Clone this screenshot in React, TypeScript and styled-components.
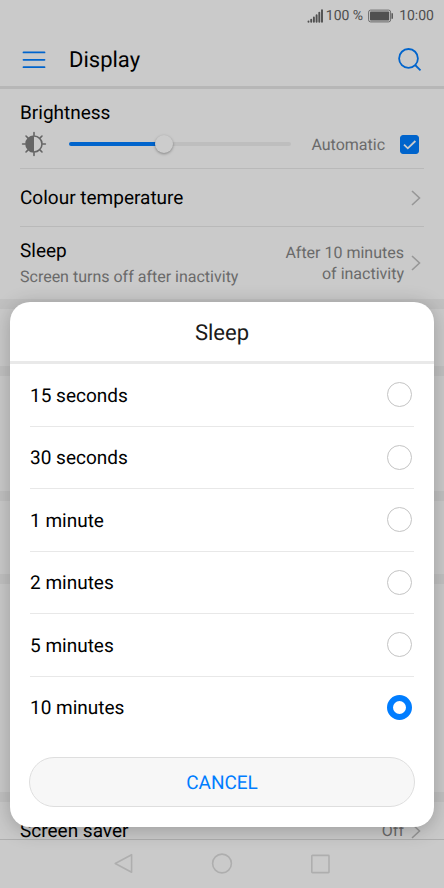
import React, { useState } from "react";
import styled, { createGlobalStyle } from "styled-components";

const accent = "#007dff";

const GlobalStyle = createGlobalStyle`
  *, *::before, *::after { box-sizing: border-box; }
  html, body, #root { height: 100%; }
  body {
    margin: 0;
    background: #fdfdfd;
    color: #000;
    font-family: Roboto, "Noto Sans", sans-serif;
    font-size: 19px;
    line-height: 24px;
    text-rendering: geometricPrecision;
  }
  button, input { font: inherit; color: inherit; margin: 0; text-rendering: inherit; }
  svg { display: block; flex: none; }
`;

const Screen = styled.div`
  position: relative;
  display: flex;
  flex-direction: column;
  height: 100vh;
  overflow: hidden;
`;

const StatusBar = styled.div`
  display: flex;
  flex: none;
  align-items: center;
  justify-content: flex-end;
  height: 31px;
  padding: 0 10px;
  color: #646464;
  font-size: 14px;
  line-height: 20px;
`;

const BatteryLevel = styled.span`
  margin: 0 5px 0 3px;
`;

const Clock = styled.span`
  margin-left: 6px;
`;

const Header = styled.header`
  display: flex;
  flex: none;
  align-items: center;
  height: 58px;
  padding: 2px 20px 0;
  border-bottom: 3px solid #e5e5e5;
`;

const IconButton = styled.button`
  display: flex;
  align-items: center;
  justify-content: center;
  width: 28px;
  height: 32px;
  padding: 0;
  border: 0;
  background: none;
  color: ${accent};
  cursor: pointer;
`;

const Title = styled.h1`
  flex: 1;
  margin: 0 0 0 21px;
  padding-top: 2px;
  font-size: 22px;
  font-weight: 400;
  line-height: 28px;
`;

const Settings = styled.main`
  flex: 1;
  min-height: 0;
  overflow: hidden;
`;

const Section = styled.section<{ $height?: number }>`
  min-height: ${(p) => p.$height ?? 0}px;
  padding: 0 20px;
  border-bottom: 10px solid #f2f2f2;
  box-sizing: content-box;
  &:last-child { border-bottom: 0; }
`;

const BrightnessBlock = styled.div`
  padding: 12px 0 8px;
  border-bottom: 1px solid #e8e8e8;
`;

const BrightnessControls = styled.div`
  display: flex;
  align-items: center;
  height: 32px;
  margin-top: 3px;
`;

const Slider = styled.input`
  appearance: none;
  flex: 1;
  min-width: 0;
  height: 24px;
  margin: 0 20px 0 21px;
  background: none;

  &::-webkit-slider-runnable-track {
    height: 4px;
    border-radius: 2px;
    background: linear-gradient(to right, ${accent} var(--level), #eeeeee var(--level));
  }
  &::-webkit-slider-thumb {
    appearance: none;
    width: 18px;
    height: 18px;
    margin-top: -7px;
    border-radius: 50%;
    background: #fff;
    box-shadow: 0 1px 3px rgba(0, 0, 0, 0.35);
  }
`;

const Muted = styled.span`
  color: #858585;
  font-size: 16px;
  line-height: 21px;
`;

const AutomaticLabel = styled.label`
  display: flex;
  align-items: center;
  gap: 15px;
  padding-right: 5px;
`;

const CheckSlot = styled.span`
  display: grid;
  color: #fff;
  > * { grid-area: 1 / 1; }
  > svg { pointer-events: none; }
`;

const Checkbox = styled.input`
  appearance: none;
  width: 19px;
  height: 19px;
  border: 1px solid #b5b5b5;
  border-radius: 3px;
  &:checked { border-color: ${accent}; background: ${accent}; }
`;

const SettingRow = styled.button<{ $height: number; $divided?: boolean }>`
  display: flex;
  align-items: center;
  width: 100%;
  min-height: ${(p) => p.$height}px;
  padding: 0;
  border: 0;
  border-bottom: ${(p) => (p.$divided ? "1px solid #e8e8e8" : "0")};
  background: none;
  text-align: left;
  cursor: pointer;
`;

const RowText = styled.span`
  display: flex;
  flex: 1;
  flex-direction: column;
  gap: 3px;
`;

const RowValue = styled(Muted)`
  max-width: 130px;
  text-align: right;
`;

const Chevron = styled.svg`
  margin: 0 3px 0 7px;
`;

const NavBar = styled.nav`
  display: flex;
  flex: none;
  align-items: center;
  justify-content: center;
  gap: 70px;
  height: 49px;
  border-top: 1px solid #dadada;
  button { color: #dadada; }
`;

const Scrim = styled.div`
  position: absolute;
  inset: 0;
  display: flex;
  align-items: flex-end;
  padding: 0 10px 61px;
  background: rgba(0, 0, 0, 0.2);
`;

const Dialog = styled.div`
  width: 100%;
  overflow: hidden;
  border-radius: 20px;
  background: #fff;
  box-shadow: 0 3px 20px rgba(0, 0, 0, 0.24);
`;

const DialogTitle = styled.h2`
  margin: 0;
  padding: 18px 20px 13px;
  border-bottom: 3px solid #e9e9e9;
  color: #1a1a1a;
  font-size: 22px;
  font-weight: 400;
  line-height: 28px;
  text-align: center;
`;

const Options = styled.div`
  display: grid;
  grid-auto-rows: 1fr;
  height: 375px;
  padding: 0 20px;
`;

const Option = styled.label`
  display: flex;
  align-items: center;
  justify-content: space-between;
  padding-right: 2px;
  border-bottom: 1px solid #e8e8e8;
  cursor: pointer;
  &:last-child { border-bottom-color: transparent; }
`;

const OptionText = styled.span`
  padding-top: 2px;
`;

const Radio = styled.input`
  appearance: none;
  width: 25px;
  height: 25px;
  border: 1px solid #c4c4c4;
  border-radius: 50%;
  &:checked { border: 6px solid ${accent}; }
`;

const DialogActions = styled.div`
  display: flex;
  padding: 18px 19px 20px;
`;

const CancelButton = styled.button`
  flex: 1;
  height: 50px;
  padding: 2px 0 0;
  border: 1px solid #dedede;
  border-radius: 25px;
  background: #f7f7f7;
  color: ${accent};
  cursor: pointer;
`;

const RightArrow = () => (
  <Chevron width="10" height="16" viewBox="0 0 10 16" fill="none" stroke="#bdbdbd" strokeWidth="1.6">
    <path d="M1 1l7.5 7L1 15" />
  </Chevron>
);

const SignalIcon = () => (
  <svg width="16" height="14" viewBox="0 0 16 14" stroke="currentColor" strokeWidth="1.9" strokeLinecap="round">
    <path d="M1.5 12.4v.3M4.2 10.8v1.9M6.9 8.5v4.2M9.6 6.2v6.5M12.3 3.6v9.1M15 1.1v11.6" />
  </svg>
);

const BatteryIcon = () => (
  <svg width="25" height="14" viewBox="0 0 25 14" fill="none">
    <rect x=".6" y="1.1" width="22" height="11.8" rx="2" stroke="#858585" />
    <rect x="2" y="2.5" width="19.2" height="9" rx=".8" fill="currentColor" />
    <path d="M24.2 4.3v5.4" stroke="currentColor" strokeWidth="1.4" />
  </svg>
);

const MenuIcon = () => (
  <svg width="24" height="18" viewBox="0 0 24 18" stroke="currentColor" strokeWidth="1.8" strokeLinecap="round">
    <path d="M1.5 1.4h21M1.5 8.8h21M1.5 16.2h21" />
  </svg>
);

const SearchIcon = () => (
  <svg width="24" height="24" viewBox="0 0 24 24" fill="none" stroke="currentColor" strokeWidth="1.8">
    <circle cx="10.5" cy="10.4" r="9.4" />
    <path d="M17.1 17l5.4 5.4" />
  </svg>
);

const BrightnessIcon = () => (
  <svg width="28" height="26" viewBox="-14 -13 28 26" fill="none" stroke="#7f7f7f" strokeWidth="1.6" strokeLinecap="round">
    <circle r="8" />
    <path d="M0 -8A8 8 0 0 0 0 8z" fill="#7f7f7f" stroke="none" />
    <path d="M0 -11.4v2.6M0 8.8v2.6M-11.4 0h2.6M8.8 0h2.6M-8 -8l1.6 1.6M8 -8l-1.6 1.6M-8 8l1.6 -1.6M8 8l-1.6 -1.6" />
  </svg>
);

const durations = ["15 seconds", "30 seconds", "1 minute", "2 minutes", "5 minutes", "10 minutes"];

export default function App() {
  const [selected, setSelected] = useState("10 minutes");
  const [level, setLevel] = useState(42);
  const [automatic, setAutomatic] = useState(true);
  const [open, setOpen] = useState(true);

  return (
    <>
      <GlobalStyle />
      <Screen>
        <StatusBar>
          <SignalIcon />
          <BatteryLevel>100 %</BatteryLevel>
          <BatteryIcon />
          <Clock>10:00</Clock>
        </StatusBar>
        <Header>
          <IconButton aria-label="Menu"><MenuIcon /></IconButton>
          <Title>Display</Title>
          <IconButton aria-label="Search"><SearchIcon /></IconButton>
        </Header>
        <Settings>
          <Section>
            <BrightnessBlock>
              <label htmlFor="brightness">Brightness</label>
              <BrightnessControls>
                <BrightnessIcon />
                <Slider
                  id="brightness"
                  type="range"
                  value={level}
                  onChange={(e) => setLevel(Number(e.target.value))}
                  style={{ "--level": `${level}%` } as React.CSSProperties}
                />
                <AutomaticLabel>
                  <Muted>Automatic</Muted>
                  <CheckSlot>
                    <Checkbox type="checkbox" checked={automatic} onChange={(e) => setAutomatic(e.target.checked)} />
                    <svg width="19" height="19" viewBox="0 0 19 19" fill="none" stroke="currentColor" strokeWidth="1.8">
                      <path d="M4 9.6l3.8 3.7L15.4 6" />
                    </svg>
                  </CheckSlot>
                </AutomaticLabel>
              </BrightnessControls>
            </BrightnessBlock>
            <SettingRow $height={58} $divided>
              <RowText>Colour temperature</RowText>
              <RightArrow />
            </SettingRow>
            <SettingRow $height={72} onClick={() => setOpen(true)}>
              <RowText>
                Sleep
                <Muted>Screen turns off after inactivity</Muted>
              </RowText>
              <RowValue>After 10 minutes of inactivity</RowValue>
              <RightArrow />
            </SettingRow>
          </Section>
          <Section $height={57} />
          <Section $height={115} />
          <Section $height={73} />
          <Section $height={208} />
          <Section>
            <SettingRow $height={57}>
              <RowText>Screen saver</RowText>
              <RowValue>Off</RowValue>
              <RightArrow />
            </SettingRow>
          </Section>
        </Settings>
        <NavBar>
          <IconButton aria-label="Back">
            <svg width="20" height="22" viewBox="0 0 20 22" fill="none" stroke="currentColor" strokeWidth="1.6" strokeLinejoin="round">
              <path d="M17.6 1.7v17.6L1.2 10.5z" />
            </svg>
          </IconButton>
          <IconButton aria-label="Home">
            <svg width="22" height="22" viewBox="0 0 22 22" fill="none" stroke="currentColor" strokeWidth="1.6">
              <circle cx="11" cy="10.5" r="9.4" />
            </svg>
          </IconButton>
          <IconButton aria-label="Recent apps">
            <svg width="20" height="20" viewBox="0 0 20 20" fill="none" stroke="currentColor" strokeWidth="1.6">
              <rect x="1.8" y="1.4" width="17.2" height="17.2" rx=".6" />
            </svg>
          </IconButton>
        </NavBar>
        {open && (
          <Scrim>
            <Dialog role="dialog" aria-modal="true" aria-labelledby="sleep-title">
              <DialogTitle id="sleep-title">Sleep</DialogTitle>
              <Options role="radiogroup" aria-labelledby="sleep-title">
                {durations.map((d) => (
                  <Option key={d}>
                    <OptionText>{d}</OptionText>
                    <Radio type="radio" name="sleep" checked={selected === d} onChange={() => setSelected(d)} />
                  </Option>
                ))}
              </Options>
              <DialogActions>
                <CancelButton onClick={() => setOpen(false)}>CANCEL</CancelButton>
              </DialogActions>
            </Dialog>
          </Scrim>
        )}
      </Screen>
    </>
  );
}
